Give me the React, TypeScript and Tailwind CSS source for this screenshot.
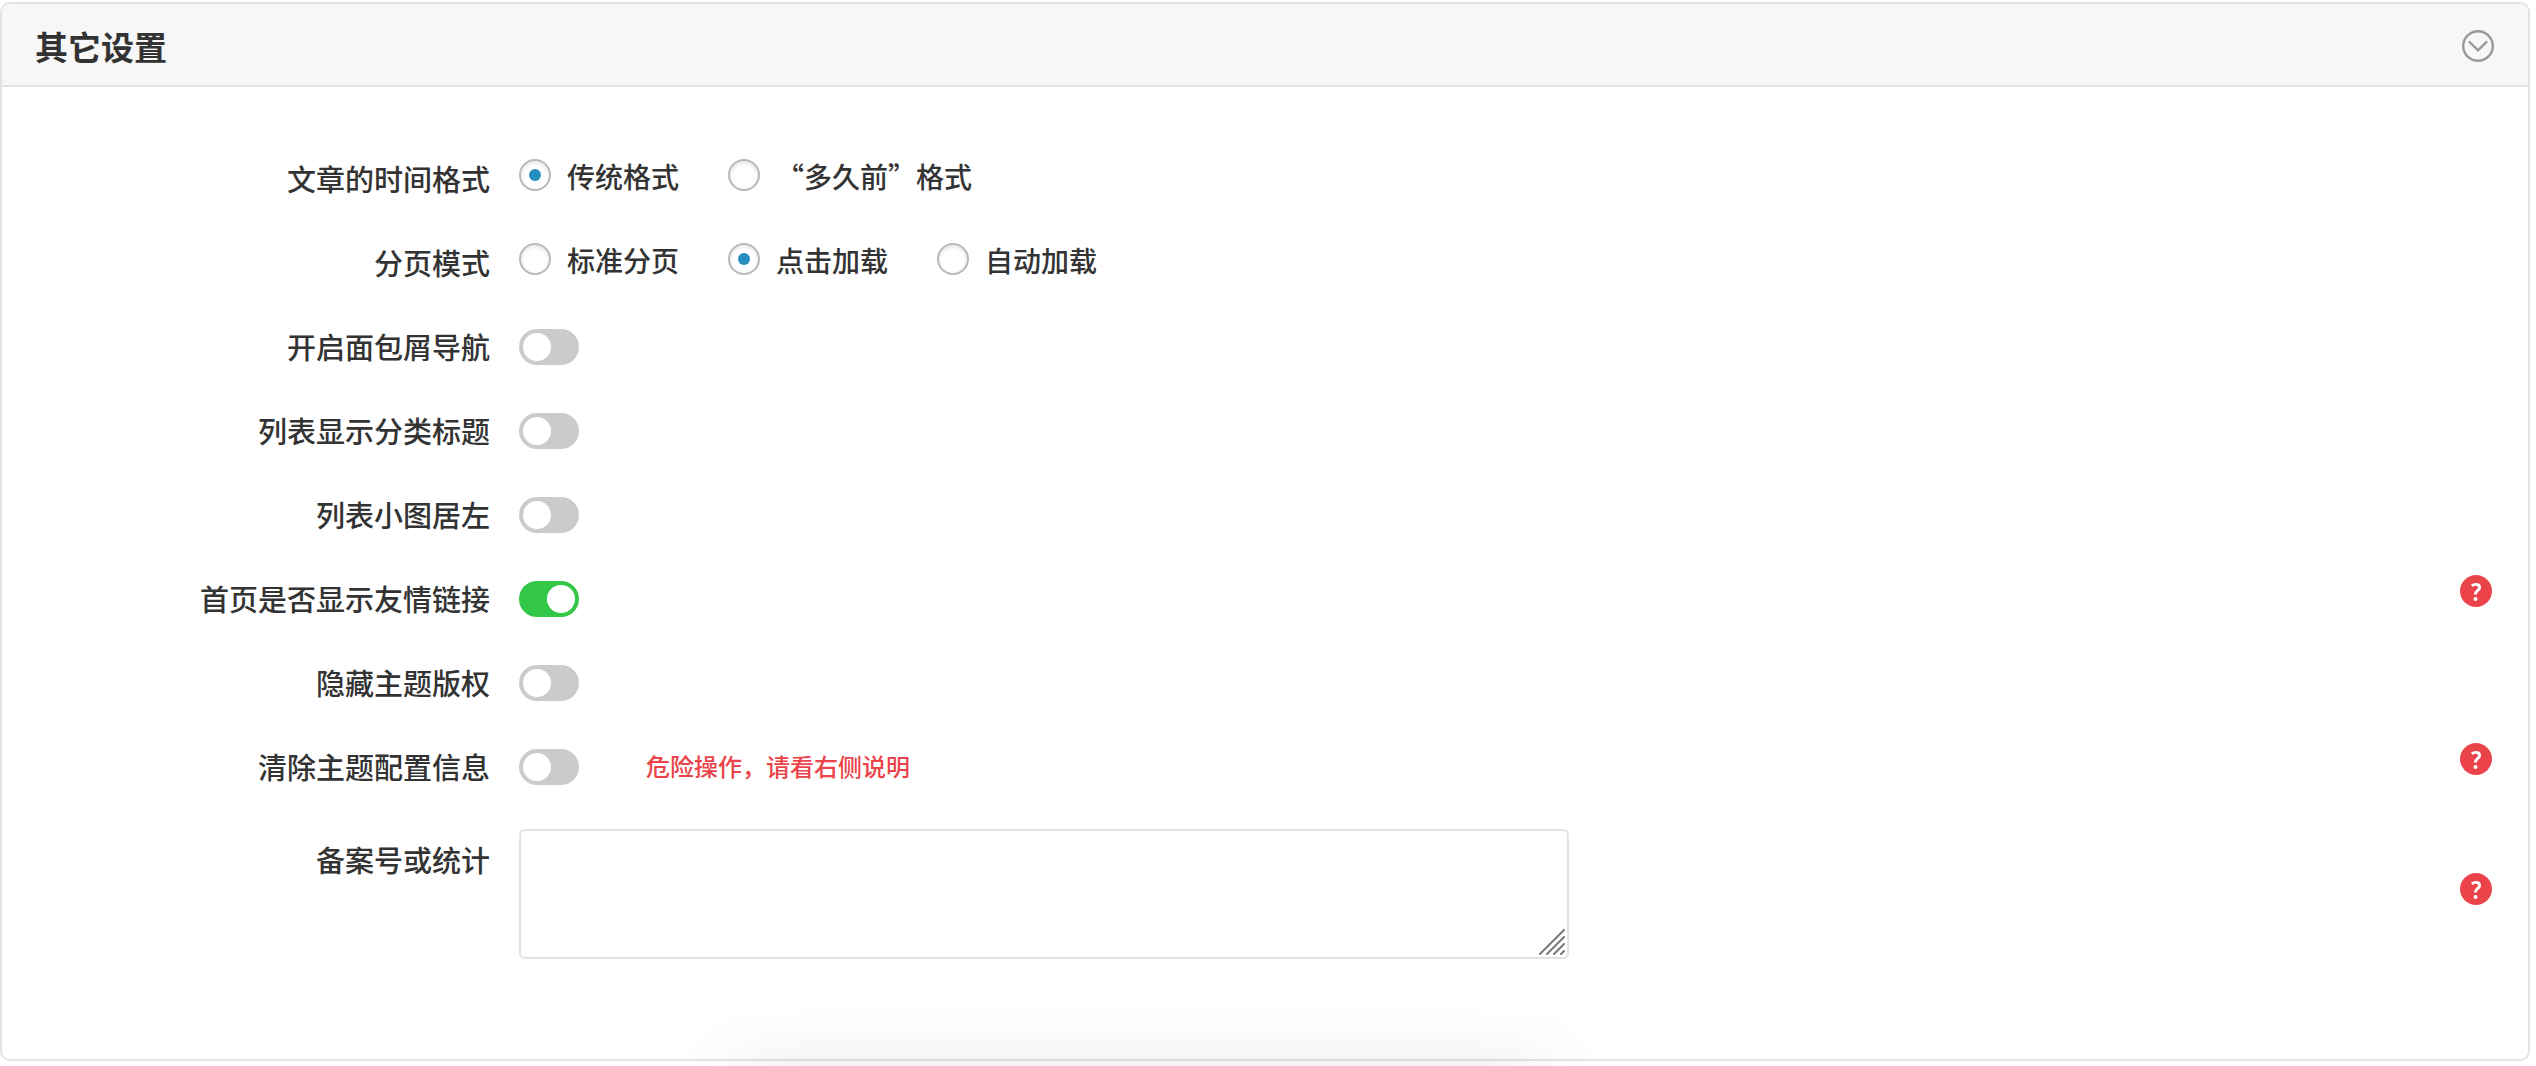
import { useState } from 'react'
import type { ReactNode } from 'react'

interface SettingRowProps {
  label: string
  htmlFor: string
  help?: string
  children: ReactNode
}

interface RadioSettingProps {
  label: string
  name: string
  options: string[]
  initial: string
}

interface SwitchSettingProps {
  id: string
  label: string
  initial?: boolean
  note?: string
  help?: string
}

// Red round help button at the far right of a row
function HelpButton({ title }: { title: string }) {
  return (
    <button type="button" title={title} aria-label={title} className="size-8 shrink-0 cursor-pointer">
      <svg viewBox="0 0 32 32" className="size-8" aria-hidden="true">
        <circle cx="16" cy="16" r="16" fill="#ea444a" />
        <path
          d="M11.8 10.7c1.300-.9 2.500-1.300 3.900-1.300 2.500 0 3.900 1.100 3.900 3 0 3.200-4.200 2.900-4.200 7.200"
          fill="none"
          stroke="#fff"
          strokeWidth="2.900"
        />
        <circle cx="15.500" cy="24" r="2" fill="#fff" />
      </svg>
    </button>
  )
}

function SettingRow({ label, htmlFor, help, children }: SettingRowProps) {
  return (
    <div className="flex h-[84px] items-center">
      <label htmlFor={htmlFor} className="w-[488px] shrink-0 pb-0.5 text-right text-[29px] leading-10">
        {label}
      </label>
      <div className="ml-[29px] flex flex-1 items-center">{children}</div>
      {help && (
        <div className="mr-9 flex pb-4">
          <HelpButton title={help} />
        </div>
      )}
    </div>
  )
}

function RadioSetting({ label, name, options, initial }: RadioSettingProps) {
  const [value, setValue] = useState(initial)

  return (
    <fieldset className="flex h-[84px] items-center" aria-label={label}>
      <span className="w-[488px] shrink-0 pb-0.5 text-right text-[29px] leading-10">{label}</span>
      <div className="ml-[29px] flex flex-1 gap-[49px] pb-1.5">
        {options.map(option => (
          <label key={option} className="flex items-center gap-4 text-[28px] leading-10">
            <input
              type="radio"
              name={name}
              checked={value === option}
              onChange={() => setValue(option)}
              className="mb-0.5 grid size-8 shrink-0 appearance-none place-items-center rounded-full border-2 border-[#b4b9be] bg-white shadow-[inset_0_2px_4px_rgba(0,0,0,0.1)] before:size-3 before:rounded-full checked:before:bg-[#278cbe]"
            />
            {option}
          </label>
        ))}
      </div>
    </fieldset>
  )
}

function SwitchSetting({ id, label, initial = false, note, help }: SwitchSettingProps) {
  const [on, setOn] = useState(initial)

  return (
    <SettingRow label={label} htmlFor={id} help={help}>
      <input
        id={id}
        type="checkbox"
        role="switch"
        checked={on}
        onChange={e => setOn(e.target.checked)}
        className="flex h-9 w-[60px] shrink-0 cursor-pointer appearance-none items-center rounded-full bg-[#cbcbcb] px-1 before:size-7 before:rounded-full before:bg-white checked:justify-end checked:bg-[#33c748]"
      />
      {note && <span className="ml-[67px] pb-0.5 text-2xl text-[#ea444a]">{note}</span>}
    </SettingRow>
  )
}

export default function App() {
  const [open, setOpen] = useState(true)

  return (
    <div className="relative min-h-screen bg-white pt-0.5 pr-1.5 pb-[5px] font-['Noto_Sans_CJK_SC',sans-serif] font-medium text-[#333]">
      <section className="rounded-[10px] border-2 border-[#e3e3e3]">
        <header className="flex h-[83px] items-center justify-between rounded-t-lg border-b-2 border-[#e3e3e3] bg-[#f7f7f7] pt-[3px] pr-[34px] pl-[33px]">
          <h2 className="text-[33px] leading-10 font-bold">其它设置</h2>
          <button
            type="button"
            aria-label="展开或收起"
            aria-expanded={open}
            onClick={() => setOpen(!open)}
            className="size-8 cursor-pointer text-[#999]"
          >
            <svg viewBox="0 0 32 32" className="size-8" fill="none" stroke="currentColor" strokeWidth="2.400" aria-hidden="true">
              <circle cx="16" cy="16" r="14.800" />
              <path d="M7.500 12l8.500 8.300 8.500-8.300" strokeLinecap="round" />
            </svg>
          </button>
        </header>

        {open && (
          <form className="pt-[50px] pb-[100px]">
            <RadioSetting
              label="文章的时间格式"
              name="time-format"
              options={['传统格式', '“多久前”格式']}
              initial="传统格式"
            />
            <RadioSetting
              label="分页模式"
              name="paging"
              options={['标准分页', '点击加载', '自动加载']}
              initial="点击加载"
            />
            <SwitchSetting id="breadcrumb" label="开启面包屑导航" />
            <SwitchSetting id="category-title" label="列表显示分类标题" />
            <SwitchSetting id="thumb-left" label="列表小图居左" />
            <SwitchSetting id="home-links" label="首页是否显示友情链接" initial help="友情链接说明" />
            <SwitchSetting id="hide-copyright" label="隐藏主题版权" />
            <SwitchSetting id="clear-config" label="清除主题配置信息" note="危险操作，请看右侧说明" help="清除配置说明" />

            {/* Record number / analytics code */}
            <div className="flex items-start pt-5">
              <label htmlFor="record" className="w-[488px] shrink-0 text-right text-[29px] leading-[60px]">
                备案号或统计
              </label>
              <div className="relative ml-[29px] flex w-full max-w-[1050px]">
                <textarea
                  id="record"
                  className="h-[130px] w-full resize-none rounded-md border-2 border-[#e3e3e3] bg-white p-3 text-2xl"
                />
                <svg
                  viewBox="0 0 26 26"
                  className="pointer-events-none absolute right-1 bottom-1 size-[26px]"
                  stroke="#777"
                  strokeWidth="2"
                  strokeLinecap="round"
                  aria-hidden="true"
                >
                  <path d="M1 25L25 1M8 25L25 8M15 25L25 15M22 25L25 22" />
                </svg>
              </div>
              <div className="mt-11 mr-9 ml-auto flex">
                <HelpButton title="备案号说明" />
              </div>
            </div>
          </form>
        )}
      </section>

      {/* Soft shadow rising from the bottom edge */}
      <div className="pointer-events-none absolute inset-x-0 bottom-0 h-14 overflow-hidden">
        <div className="mt-14 ml-[29%] h-40 w-[32%] shadow-[0_4px_80px_rgba(0,0,0,0.1)]" />
      </div>
    </div>
  )
}
